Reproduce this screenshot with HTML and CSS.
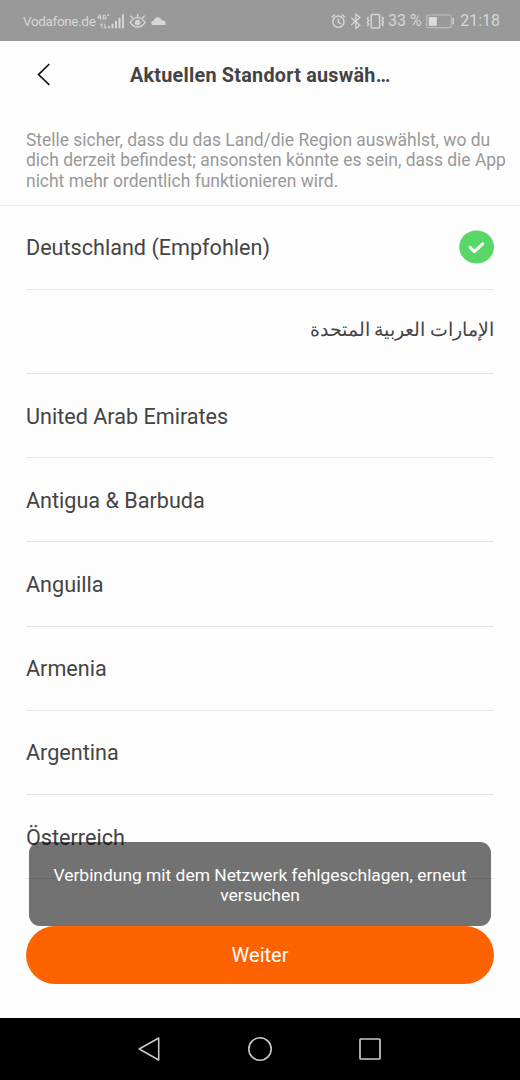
FILE: index.html
```html
<!DOCTYPE html>
<html lang="de">
<head>
<meta charset="utf-8">
<title>Aktuellen Standort auswählen</title>
<link rel="stylesheet" href="styles.css">
</head>
<body>
<div class="screen">
  <div class="status">
    <span class="carrier">Vodafone.de</span>
    <svg class="status-left" width="72" height="20" viewBox="96 10 72 20">
      <g fill="none" stroke="#d6d6d6" stroke-width="1.1">
        <path d="M99.6 13.2l-1.6 3.4h3.2M100.5 14.6v3.8M106 14.2h-2.8v3.8h2.6v-2h-1.2M107.2 14h2M108.2 13v2M101.9 22.8v4.4M100.6 24.2l1.3-1.5M104.9 22.8v4.4M106.2 25.8l-1.3 1.5"/>
      </g>
      <path fill="#d6d6d6" d="M108.2 25h1.8v2.2h-1.8zM111.5 22.8h2v4.4h-2zM115 20h2v7.2h-2zM118.5 16.8h2v10.4h-2zM122 13.2h1.9v14h-1.9z"/>
      <path d="M130.2 21.4c4-6.4 10.8-6.4 14.8 0c-4 6.2-10.8 6.2-14.8 0zM137.6 16v-3M133 17l-2.6-2.2M142.2 17l2.6-2.2" fill="none" stroke="#d6d6d6" stroke-width="1.4"/>
      <circle cx="137.6" cy="21.5" r="2.7" fill="#d6d6d6"/>
      <path fill="#d6d6d6" d="M153.8 24c-3.4 0-3.4-4 0-4.3c1-4.6 7.4-4.2 7.7-.2c3-.7 4.3 1.4 4.3 4.5z"/>
    </svg>
    <span class="spacer"></span>
    <svg class="status-right" width="58" height="20" viewBox="330 10 58 20">
      <g fill="none" stroke="#d6d6d6" stroke-width="1.5">
        <circle cx="338.4" cy="20.7" r="5.6"/>
        <path d="M338.4 17.4v3.6l2.4 2M331.7 16.3l3.3-2.8M345.1 16.3l-3.3-2.8"/>
        <path stroke-width="1.3" d="M351.3 16.8l8.6 7.4-4 3.2V13.2l4 3.2-8.6 7.6"/>
        <rect x="371.2" y="13.6" width="8.4" height="13.4" rx="1"/>
        <path d="M368.6 15.8l-1.2 1.8 1.2 1.8-1.2 1.8 1.2 1.8-1.2 2M382.2 15.8l1.2 1.8-1.2 1.8 1.2 1.8-1.2 1.8 1.2 2"/>
      </g>
    </svg>
    <span class="percent">33 %</span>
    <svg class="battery" width="30" height="16" viewBox="425 12 30 16">
      <rect x="426.8" y="14" width="24.4" height="12.6" rx="1.5" fill="none" stroke="#bebebe" stroke-width="1.1"/>
      <path fill="#dcdcdc" d="M428.8 16h8v8.8h-8z"/>
      <path fill="#cfcfcf" d="M452.4 17h1.6v6.6h-1.6z"/>
    </svg>
    <span class="clock">21:18</span>
  </div>
  <header class="titlebar">
    <svg class="back" width="14" height="24" viewBox="0 0 14 24"><path d="M12.3 1L1.5 11.6l10.8 10.3" fill="none" stroke="#111" stroke-width="1.6"/></svg>
    <h1 class="title">Aktuellen Standort auswäh…</h1>
  </header>
  <p class="hint">Stelle sicher, dass du das Land/die Region auswählst, wo du<br>dich derzeit befindest; ansonsten könnte es sein, dass die App<br>nicht mehr ordentlich funktionieren wird.</p>
  <ul class="list">
    <li class="row"><span>Deutschland (Empfohlen)</span>
      <svg class="check" width="36" height="34" viewBox="0 0 36 34"><ellipse cx="17.6" cy="17" rx="17.4" ry="16.5" fill="#58d668"/><path d="M11.1 17.4l4.3 4.2 8.3-7.8" fill="none" stroke="#fff" stroke-width="3" stroke-linecap="round" stroke-linejoin="round"/></svg></li>
    <li class="row arabic" dir="rtl" lang="ar"><span>الإمارات العربية المتحدة</span></li>
    <li class="row"><span>United Arab Emirates</span></li>
    <li class="row"><span>Antigua &amp; Barbuda</span></li>
    <li class="row"><span>Anguilla</span></li>
    <li class="row"><span>Armenia</span></li>
    <li class="row"><span>Argentina</span></li>
    <li class="row"><span>Österreich</span></li>
  </ul>
  <footer class="action"><button class="next">Weiter</button></footer>
  <nav class="navbar">
    <svg width="24" height="26" viewBox="0 0 24 26"><path d="M21.7 2v22L2.2 13z" fill="none" stroke="#c8c8c8" stroke-width="1.6" stroke-linejoin="round"/></svg>
    <svg width="26" height="26" viewBox="0 0 26 26"><circle cx="13" cy="13" r="11.2" fill="none" stroke="#c8c8c8" stroke-width="1.6"/></svg>
    <svg width="24" height="26" viewBox="0 0 24 26"><rect x="2" y="3" width="20" height="20" rx=".7" fill="none" stroke="#c8c8c8" stroke-width="1.7"/></svg>
  </nav>
  <div class="toast">Verbindung mit dem Netzwerk fehlgeschlagen, erneut<br>versuchen</div>
</div>
</body>
</html>
```
FILE: styles.css
```css
* { box-sizing: border-box; }
body { margin: 0; background: #fdfdfd; font-family: Roboto, "Noto Sans", sans-serif; color: #444; }
.screen { position: relative; width: 520px; height: 1080px; display: flex; flex-direction: column; overflow: hidden; }
.status { height: 41px; flex: none; background: #999; color: #d6d6d6; display: flex; align-items: center; padding: 0 20px 0 23px; }
.carrier { font-size: 13.5px; width: 73px; white-space: nowrap; letter-spacing: -.35px; }
.spacer { flex: 1; }
.percent { font-size: 16px; width: 37px; white-space: nowrap; }
.clock { font-size: 16px; width: 40px; margin-left: 5px; text-align: right; white-space: nowrap; }
.titlebar { height: 68px; flex: none; display: flex; align-items: center; padding-left: 37px; }
.back { flex: none; }
.title { margin: 1px 0 0 79px; font-size: 19.8px; line-height: 26px; font-weight: 700; letter-spacing: .24px; white-space: nowrap; }
.hint { margin: 0; height: 96.6px; flex: none; padding: 21px 0 0 26px; font-size: 17.45px; line-height: 20.3px; color: #999; white-space: nowrap; border-bottom: 1px solid #ececec; }
.list { margin: 0; padding: 0 26px; list-style: none; height: 720.4px; flex: none; }
.row { height: 84.2px; padding-top: 2px; display: flex; align-items: center; justify-content: space-between; border-bottom: 1px solid #e4e4e4; font-size: 21.6px; line-height: 26px; white-space: nowrap; }
.check { margin: -3px -1px 0 0; }
.row.arabic { font-size: 19px; padding: 0 0 3px; }
.action { height: 92px; flex: none; padding: 0 26px; }
.next { display: block; width: 100%; height: 58px; border: 0; border-radius: 29px; background: #ff6200; color: #fff; font: 20px/58px Roboto, sans-serif; padding: 0; }
.navbar { height: 62px; flex: none; background: #000; display: flex; align-items: center; justify-content: space-between; padding: 0 138px 0 137px; }
.toast { position: absolute; left: 29px; top: 842px; width: 462px; height: 84px; padding-top: 23px; border-radius: 11px; background: rgba(0, 0, 0, .55); color: #fff; text-align: center; font-size: 17.42px; line-height: 20.4px; white-space: nowrap; }
```
